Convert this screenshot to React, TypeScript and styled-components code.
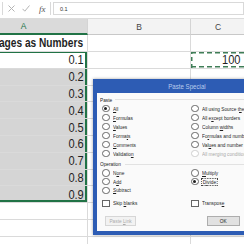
import React from 'react'
import styled, { createGlobalStyle } from 'styled-components'

const GlobalStyle = createGlobalStyle`
  html, body { margin: 0; padding: 0; background: #fff; overflow: hidden; }
  body { font-family: "Liberation Sans", Arial, sans-serif; }
`

const Screen = styled.div`
  position: relative;
  width: 244px;
  height: 244px;
  overflow: hidden;
  background: #fff;
`

/* the source screenshot is squeezed sideways, so text is narrowed to match */
const Narrow = styled.span<{ $origin?: 'left' | 'right' | 'center' }>`
  display: inline-block;
  white-space: nowrap;
  transform: scaleX(0.82);
  transform-origin: ${p => p.$origin ?? 'left'} center;
`

/* formula bar */
const FormulaBar = styled.div`
  display: flex;
  align-items: center;
  gap: 2px;
  height: 18px;
  padding: 2px 0 3px 2px;
  box-sizing: border-box;
`

const FxButtons = styled.div`
  display: flex;
  align-items: center;
  gap: 7px;
  width: 49px;
  height: 13px;
  padding-left: 5px;
  box-sizing: border-box;
  border-left: 1px solid #d9d9d9;
  border-right: 1px solid #d9d9d9;
`

const Fx = styled.span`
  font-family: "Liberation Serif", serif;
  font-style: italic;
  font-size: 9px;
  color: #555;
  margin-left: 2px;
`

const FormulaInput = styled.div`
  flex: 1;
  height: 13px;
  border: 1px solid #d9d9d9;
  box-sizing: border-box;
  padding-left: 6px;
  display: flex;
  align-items: center;
  font-size: 5.5px;
  color: #333;
`

/* grid: column A starts off the left edge of the shot */
const Sheet = styled.div`
  display: flex;
  flex-direction: column;
  width: max-content;
  margin-left: -40px;
`

const HeaderRow = styled.div`
  display: flex;
  height: 16px;
  background: #f3f3f3;
  border-top: 1px solid #dcdcdc;
`

const ColHead = styled.div<{ $w: number; $active?: boolean }>`
  flex: 0 0 ${p => p.$w}px;
  display: flex;
  align-items: center;
  justify-content: center;
  box-sizing: border-box;
  font-size: 8.5px;
  color: ${p => (p.$active ? '#217346' : '#444')};
  background: ${p => (p.$active ? '#dadada' : 'transparent')};
  border-right: 1px solid #d4d4d4;
  border-bottom: ${p => (p.$active ? '2px solid #217346' : '1px solid #c8c8c8')};
`

const Row = styled.div<{ $h: number }>`
  display: flex;
  height: ${p => p.$h}px;
`

const Cell = styled.div<{
  $w: number
  $sel?: boolean
  $first?: boolean
  $last?: boolean
  $fill?: boolean
}>`
  flex: 0 0 ${p => p.$w}px;
  display: flex;
  align-items: center;
  justify-content: flex-end;
  overflow: hidden;
  white-space: nowrap;
  box-sizing: border-box;
  padding-right: 3px;
  font-size: 13.5px;
  color: #1f1f1f;
  background: ${p => (p.$fill ? '#d5d5d5' : '#fff')};
  border-right: 1px solid #dadada;
  border-bottom: 1px solid #dadada;
  box-shadow: ${p =>
    p.$sel
      ? [
          'inset -2px 0 0 #217346',
          p.$first ? 'inset 0 1px 0 #217346' : '',
          p.$last ? 'inset 0 -2px 0 #217346' : '',
        ]
          .filter(Boolean)
          .join(', ')
      : 'none'};
`

const TitleCell = styled(Cell)`
  font-weight: 700;
  font-size: 12.4px;
  padding-right: 4px;
`

const CopiedCell = styled(Cell)`
  padding-right: 4px;
  background-image:
    repeating-linear-gradient(90deg, #3f7d57 0 5px, transparent 5px 8px),
    repeating-linear-gradient(90deg, #3f7d57 0 5px, transparent 5px 8px),
    repeating-linear-gradient(0deg, #3f7d57 0 4px, transparent 4px 7px);
  background-size: 100% 1.5px, 100% 1.5px, 1.5px 100%;
  background-position: 0 0, 0 100%, 0 0;
  background-repeat: no-repeat;
`

/* dialog */
const Dialog = styled.div`
  position: absolute;
  left: 93px;
  top: 79px;
  width: 188px;
  height: 156px;
  box-sizing: border-box;
  padding: 0 4px 4px;
  background: #2d5cb4;
  display: flex;
  flex-direction: column;
  box-shadow: 0 0 3px rgba(0, 0, 0, 0.35);
`

const TitleBar = styled.div`
  height: 14px;
  display: flex;
  align-items: center;
  justify-content: center;
  font-size: 7.5px;
  color: #b9cbec;
`

const Body = styled.div`
  flex: 1;
  background: #fafafa;
  padding: 2px 0 0 3px;
  display: flex;
  flex-direction: column;
`

const GroupHead = styled.div<{ $top?: number }>`
  display: flex;
  align-items: center;
  height: 9px;
  margin-top: ${p => p.$top ?? 0}px;
  font-size: 5.8px;
  color: #222;
  &::after {
    content: '';
    flex: 1;
    border-top: 1px solid #e2e2e2;
  }
`

const Options = styled.div<{ $rows: number }>`
  display: grid;
  grid-template-columns: 89px auto;
  grid-auto-rows: ${p => p.$rows}px;
  padding-left: 2px;
`

const Option = styled.div<{ $disabled?: boolean }>`
  display: flex;
  align-items: center;
  gap: 3px;
  font-size: 5.8px;
  white-space: nowrap;
  color: ${p => (p.$disabled ? '#a8a8a8' : '#1e1e1e')};
`

const Radio = styled.span<{ $checked?: boolean; $disabled?: boolean }>`
  width: 5.5px;
  height: 5.5px;
  flex-shrink: 0;
  border-radius: 50%;
  border: 1px solid ${p => (p.$disabled ? '#cfcfcf' : '#666')};
  background: #fff;
  display: flex;
  align-items: center;
  justify-content: center;
  &::after {
    content: '';
    width: 3px;
    height: 3px;
    border-radius: 50%;
    background: #1e1e1e;
    display: ${p => (p.$checked ? 'block' : 'none')};
  }
`

const Check = styled.span`
  width: 5.5px;
  height: 5.5px;
  flex-shrink: 0;
  border: 1px solid #666;
  background: #fff;
`

const Focus = styled.span`
  outline: 1px dotted #444;
  padding: 0 1px;
`

const ButtonRow = styled.div`
  display: flex;
  height: 10px;
  margin-top: 8px;
  padding-left: 5px;
`

const Button = styled.div<{ $w: number; $disabled?: boolean; $gap?: number }>`
  flex: 0 0 ${p => p.$w}px;
  margin-left: ${p => p.$gap ?? 0}px;
  box-sizing: border-box;
  display: flex;
  align-items: center;
  justify-content: center;
  font-size: 5.8px;
  color: ${p => (p.$disabled ? '#ababab' : '#1e1e1e')};
  background: ${p => (p.$disabled ? '#f2f2f2' : '#e1e1e1')};
  border: 1px solid ${p => (p.$disabled ? '#d6d6d6' : '#adadad')};
`

type Opt = { label: React.ReactNode; checked?: boolean; disabled?: boolean; focus?: boolean }

const pasteOptions: Opt[] = [
  { label: <><u>A</u>ll</>, checked: true },
  { label: <>All using Source t<u>h</u>eme</> },
  { label: <><u>F</u>ormulas</> },
  { label: <>All e<u>x</u>cept borders</> },
  { label: <><u>V</u>alues</> },
  { label: <>Column <u>w</u>idths</> },
  { label: <>Forma<u>t</u>s</> },
  { label: <>Fo<u>r</u>mulas and number formats</> },
  { label: <><u>C</u>omments</> },
  { label: <>Val<u>u</u>es and number formats</> },
  { label: <>Validatio<u>n</u></> },
  { label: <>All merging conditional formats</>, disabled: true },
]

const operationOptions: (Opt | null)[] = [
  { label: <>N<u>o</u>ne</> },
  { label: <><u>M</u>ultiply</> },
  { label: <>A<u>d</u>d</> },
  { label: <>D<u>i</u>vide</>, checked: true, focus: true },
  { label: <><u>S</u>ubtract</> },
  null,
]

const values = ['0.1', '0.2', '0.3', '0.4', '0.5', '0.6', '0.7', '0.8', '0.9']

const COL_A = 128
const COL_B = 103
const COL_C = 55

function RadioList({ items, rowH }: { items: (Opt | null)[]; rowH: number }) {
  return (
    <Options $rows={rowH}>
      {items.map((o, i) =>
        o ? (
          <Option key={i} $disabled={o.disabled}>
            <Radio $checked={o.checked} $disabled={o.disabled} />
            <Narrow>{o.focus ? <Focus>{o.label}</Focus> : o.label}</Narrow>
          </Option>
        ) : (
          <span key={i} />
        )
      )}
    </Options>
  )
}

export default function App() {
  return (
    <Screen>
      <GlobalStyle />
      <FormulaBar>
        <FxButtons>
          <svg width="7" height="7" viewBox="0 0 7 7">
            <path d="M0.5 0.5 L6.5 6.5 M6.5 0.5 L0.5 6.5" stroke="#b4b4b4" strokeWidth="1" />
          </svg>
          <svg width="8" height="7" viewBox="0 0 8 7">
            <path d="M0.5 3.8 L2.8 6.2 L7.5 0.5" stroke="#b4b4b4" strokeWidth="1" fill="none" />
          </svg>
          <Fx>fx</Fx>
        </FxButtons>
        <FormulaInput>0.1</FormulaInput>
      </FormulaBar>

      <Sheet>
        <HeaderRow>
          <ColHead $w={COL_A} $active>A</ColHead>
          <ColHead $w={COL_B}>B</ColHead>
          <ColHead $w={COL_C}>C</ColHead>
        </HeaderRow>
        <Row $h={17}>
          <TitleCell $w={COL_A}>
            <Narrow $origin="right">Percentages as Numbers</Narrow>
          </TitleCell>
          <Cell $w={COL_B} />
          <Cell $w={COL_C} />
        </Row>
        {values.map((v, i) => (
          <Row key={v} $h={16.8}>
            <Cell
              $w={COL_A}
              $sel
              $first={i === 0}
              $last={i === values.length - 1}
              $fill={i > 0}
            >
              <Narrow $origin="right">{v}</Narrow>
            </Cell>
            <Cell $w={COL_B} />
            {i === 0 ? (
              <CopiedCell $w={COL_C}>
                <Narrow $origin="right">100</Narrow>
              </CopiedCell>
            ) : (
              <Cell $w={COL_C} />
            )}
          </Row>
        ))}
        {[0, 1, 2].map(i => (
          <Row key={i} $h={16.8}>
            <Cell $w={COL_A} />
            <Cell $w={COL_B} />
            <Cell $w={COL_C} />
          </Row>
        ))}
      </Sheet>

      <Dialog>
        <TitleBar>
          <Narrow $origin="center">Paste Special</Narrow>
        </TitleBar>
        <Body>
          <GroupHead>
            <Narrow>Paste</Narrow>
          </GroupHead>
          <RadioList items={pasteOptions} rowH={9} />
          <GroupHead $top={1.5}>
            <Narrow>Operation</Narrow>
          </GroupHead>
          <RadioList items={operationOptions} rowH={8.8} />
          <Options $rows={9} style={{ marginTop: 4 }}>
            <Option>
              <Check />
              <Narrow>Skip <u>b</u>lanks</Narrow>
            </Option>
            <Option>
              <Check />
              <Narrow>Transpos<u>e</u></Narrow>
            </Option>
          </Options>
          <ButtonRow>
            <Button $w={31} $disabled>
              <Narrow $origin="center">Paste <u>L</u>ink</Narrow>
            </Button>
            <Button $w={33} $gap={71}>
              <Narrow $origin="center">OK</Narrow>
            </Button>
            <Button $w={33} $gap={5}>
              <Narrow $origin="center">Cancel</Narrow>
            </Button>
          </ButtonRow>
        </Body>
      </Dialog>
    </Screen>
  )
}
